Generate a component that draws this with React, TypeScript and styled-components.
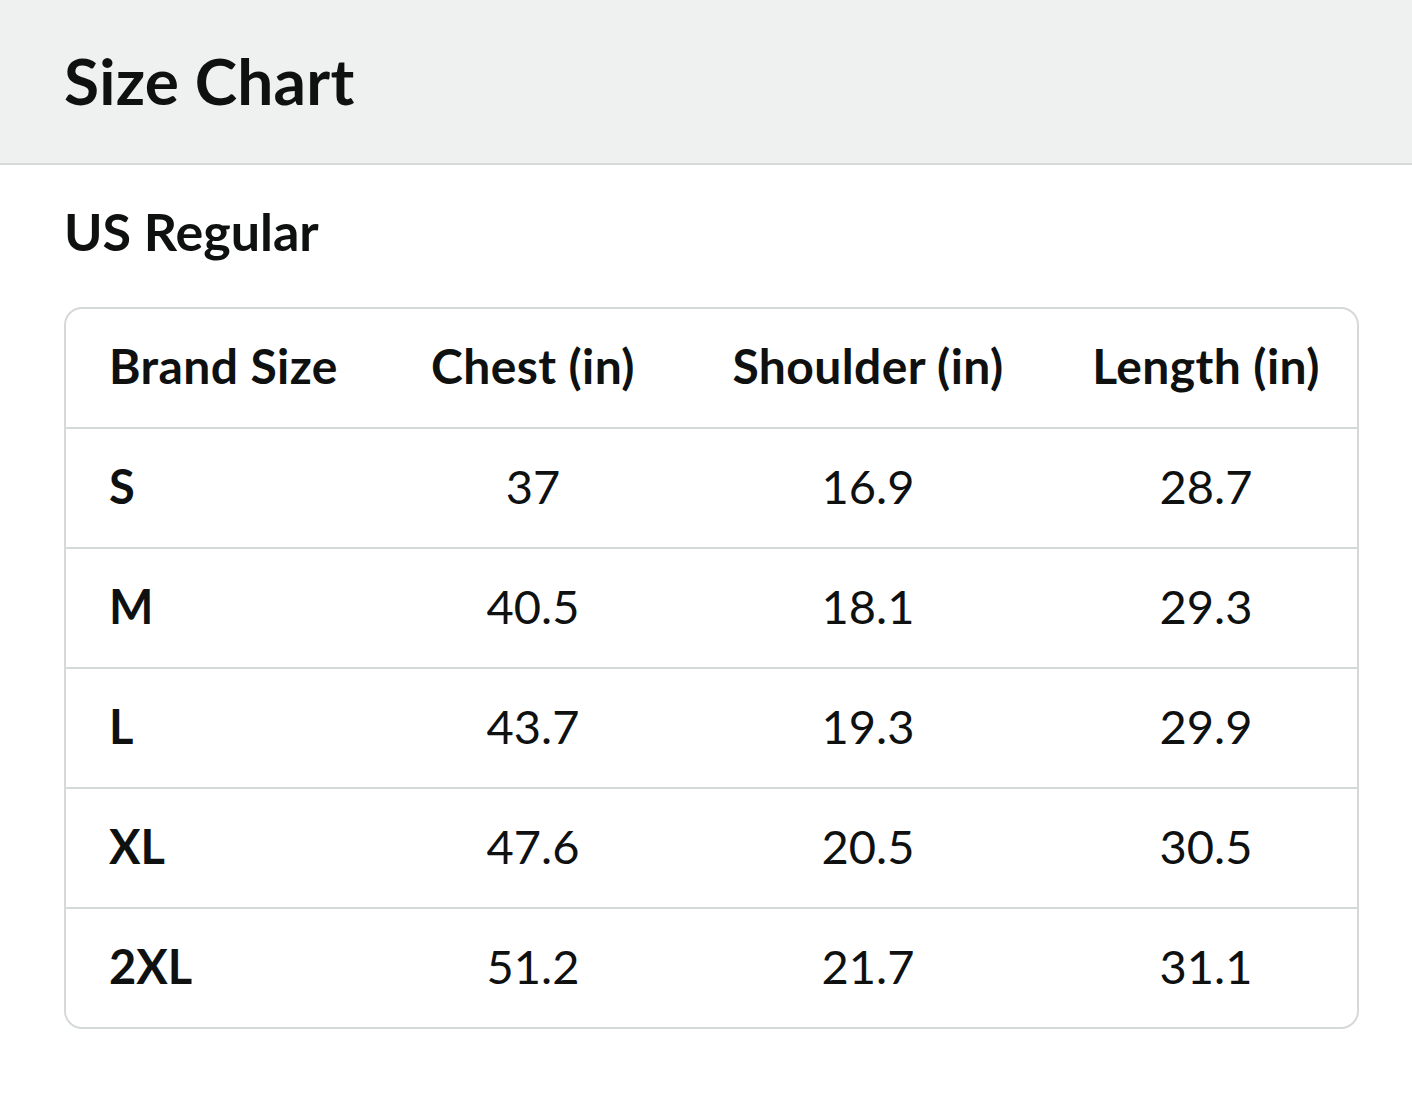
import styled, { createGlobalStyle } from 'styled-components';

const GlobalStyle = createGlobalStyle`
  html, body {
    margin: 0;
    padding: 0;
    background: #ffffff;
  }
  body {
    font-family: Lato, "Noto Sans", sans-serif;
    color: #0f1111;
  }
`;

const columns = ['Brand Size', 'Chest (in)', 'Shoulder (in)', 'Length (in)'];

const rows = [
  ['S', '37', '16.9', '28.7'],
  ['M', '40.5', '18.1', '29.3'],
  ['L', '43.7', '19.3', '29.9'],
  ['XL', '47.6', '20.5', '30.5'],
  ['2XL', '51.2', '21.7', '31.1'],
];

function App() {
  return (
    <>
      <GlobalStyle />
      <Header>
        <Title>Size Chart</Title>
      </Header>
      <Main>
        <SectionTitle>US Regular</SectionTitle>
        <Table>
          <Row>
            {columns.map((col, i) => (
              <HeadCell key={col} $first={i === 0}>
                {col}
              </HeadCell>
            ))}
          </Row>
          {rows.map((row, r) => (
            <Row key={row[0]} $last={r === rows.length - 1}>
              {row.map((val, i) => (
                <Cell key={i} $bold={i === 0} $first={i === 0}>
                  {val}
                </Cell>
              ))}
            </Row>
          ))}
        </Table>
      </Main>
    </>
  );
}

export default App;

const Header = styled.header`
  height: 163px;
  display: flex;
  align-items: center;
  padding: 0 64px;
  background: #eff0f0;
  border-bottom: 2px solid #d5d9d9;
`;

const Title = styled.h1`
  margin: 0 0 2px;
  font-size: 64px;
  font-weight: 700;
  line-height: 1;
  letter-spacing: 0.2px;
`;

const Main = styled.main`
  padding: 40px 53px 0 64px;
`;

const SectionTitle = styled.h2`
  margin: 0 0 50px;
  font-size: 52px;
  font-weight: 700;
  line-height: 1;
`;

const Table = styled.div`
  border: 2px solid #d5d9d9;
  border-radius: 18px;
  overflow: hidden;
`;

const Row = styled.div<{ $last?: boolean }>`
  display: grid;
  grid-template-columns: 319px 296px 374px 302px;
  height: 118px;
  border-bottom: ${(p) => (p.$last ? 'none' : '2px solid #d5d9d9')};
`;

const Cell = styled.div<{ $bold?: boolean; $first?: boolean }>`
  display: flex;
  align-items: center;
  justify-content: ${(p) => (p.$first ? 'flex-start' : 'center')};
  padding-left: ${(p) => (p.$first ? '43px' : '0')};
  padding-bottom: 4px;
  font-size: 47px;
  font-weight: ${(p) => (p.$bold ? 700 : 400)};
  white-space: nowrap;
`;

const HeadCell = styled(Cell)`
  font-size: 48px;
  font-weight: 700;
  letter-spacing: 0.4px;
  padding-bottom: 6px;
`;
